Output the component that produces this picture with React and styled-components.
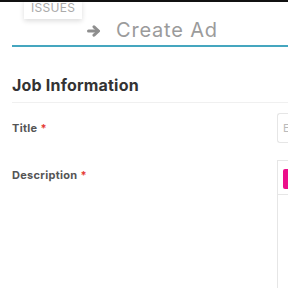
import React from 'react'
import styled, { createGlobalStyle } from 'styled-components'

const Global = createGlobalStyle`
  html, body {
    margin: 0;
    padding: 0;
    background: #fff;
    overflow: hidden;
    font-family: Inter, "Open Sans", sans-serif;
  }
`

const Page = styled.div`
  width: 288px;
  height: 288px;
  overflow: hidden;
  border-top: 2px solid #111;
  box-sizing: border-box;
`

const Header = styled.div`
  display: flex;
  flex-direction: column;
  margin-left: 12px;
  border-bottom: 2px solid #45a6bf;
  height: 45px;
  box-sizing: border-box;
`

const Tab = styled.div`
  align-self: flex-start;
  margin-left: 12px;
  margin-top: -2px;
  padding: 0 7px;
  height: 19px;
  background: #fff;
  box-shadow: 0 2px 5px rgba(0, 0, 0, 0.14);
  color: #aaa;
  font-size: 12px;
  line-height: 15px;
  letter-spacing: 0.3px;
`

const TitleRow = styled.div`
  display: flex;
  align-items: center;
  gap: 15px;
  padding-left: 75px;
  margin-top: -1px;
  color: #9b9b9b;
`

const ArrowIcon = styled.svg`
  width: 14px;
  height: 12px;
  flex-shrink: 0;
  margin-top: 1px;
`

const Heading = styled.h1`
  margin: 0;
  font-size: 20px;
  font-weight: 400;
  line-height: 24px;
  letter-spacing: 0.8px;
`

const Body = styled.div`
  padding-left: 12px;
`

const SectionTitle = styled.h2`
  margin: 0;
  padding-top: 28px;
  padding-bottom: 6px;
  font-size: 16px;
  font-weight: 700;
  line-height: 21px;
  letter-spacing: 0.2px;
  color: #333;
  border-bottom: 1px solid #f0f0f0;
`

const Row = styled.div`
  display: grid;
  grid-template-columns: 265px 1fr;
  margin-top: ${p => p.$gap}px;
`

const Label = styled.label`
  padding-top: ${p => p.$offset}px;
  font-size: 11px;
  font-weight: 700;
  color: #555;
  line-height: 14px;
  letter-spacing: 0.3px;
`

const Star = styled.span`
  color: #e53935;
  margin-left: 3px;
`

const Input = styled.div`
  height: 30px;
  border: 1px solid #e6e6e6;
  border-right: none;
  border-radius: 3px 0 0 3px;
  box-sizing: border-box;
  padding-left: 5px;
  font-size: 11px;
  line-height: 28px;
  color: #bbb;
  white-space: nowrap;
  overflow: hidden;
`

const Editor = styled.div`
  height: 140px;
  border: 1px solid #e6e6e6;
  border-right: none;
  box-sizing: border-box;
`

const Toolbar = styled.div`
  padding: 8px 0 5px 5px;
  border-bottom: 1px solid #e6e6e6;
`

const ToolButton = styled.div`
  width: 12px;
  height: 20px;
  background: #ec0f8b;
  border-radius: 2px 0 0 2px;
`

export default function App() {
  return (
    <Page>
      <Global />
      <Header>
        <Tab>ISSUES</Tab>
        <TitleRow>
          <ArrowIcon viewBox="0 0 14 12">
            <path d="M1.5 6 H11" stroke="#8e8e8e" strokeWidth="3" strokeLinecap="round" fill="none" />
            <path d="M7 1.8 L11.5 6 L7 10.2" stroke="#8e8e8e" strokeWidth="3" strokeLinecap="round" strokeLinejoin="round" fill="none" />
          </ArrowIcon>
          <Heading>Create Ad</Heading>
        </TitleRow>
      </Header>
      <Body>
        <SectionTitle>Job Information</SectionTitle>
        <Row $gap={10}>
          <Label $offset={8}>Title<Star>*</Star></Label>
          <Input>E</Input>
        </Row>
        <Row $gap={17}>
          <Label $offset={8}>Description<Star>*</Star></Label>
          <Editor>
            <Toolbar>
              <ToolButton />
            </Toolbar>
          </Editor>
        </Row>
      </Body>
    </Page>
  )
}
